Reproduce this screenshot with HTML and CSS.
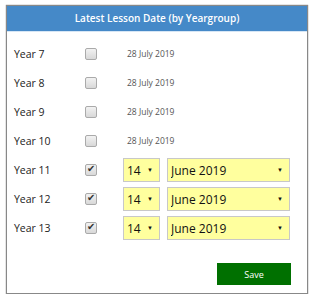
FILE: index.html
```html
<!DOCTYPE html>
<html lang="en">

<head>
    <meta charset="UTF-8">
    <meta name="viewport" content="width=device-width, initial-scale=1.0">
    <title>Latest Lesson Date</title>
    <link rel="stylesheet" href="styles.css">
</head>

<body>

    <!-- Latest lesson date panel -->
    <div class="panel">
        <div class="panel-header">Latest Lesson Date (by Yeargroup)</div>
        <div class="panel-body">
            <div class="year-row">
                <span class="year-label">Year 7</span>
                <input type="checkbox" class="year-check">
                <span class="last-date">28 July 2019</span>
            </div>
            <div class="year-row">
                <span class="year-label">Year 8</span>
                <input type="checkbox" class="year-check">
                <span class="last-date">28 July 2019</span>
            </div>
            <div class="year-row">
                <span class="year-label">Year 9</span>
                <input type="checkbox" class="year-check">
                <span class="last-date">28 July 2019</span>
            </div>
            <div class="year-row">
                <span class="year-label">Year 10</span>
                <input type="checkbox" class="year-check">
                <span class="last-date">28 July 2019</span>
            </div>
            <div class="year-row">
                <span class="year-label">Year 11</span>
                <input type="checkbox" class="year-check" checked>
                <div class="date-pick">
                    <div class="select-wrap day"><select><option>14</option></select></div>
                    <div class="select-wrap month"><select><option>June 2019</option></select></div>
                </div>
            </div>
            <div class="year-row">
                <span class="year-label">Year 12</span>
                <input type="checkbox" class="year-check" checked>
                <div class="date-pick">
                    <div class="select-wrap day"><select><option>14</option></select></div>
                    <div class="select-wrap month"><select><option>June 2019</option></select></div>
                </div>
            </div>
            <div class="year-row">
                <span class="year-label">Year 13</span>
                <input type="checkbox" class="year-check" checked>
                <div class="date-pick">
                    <div class="select-wrap day"><select><option>14</option></select></div>
                    <div class="select-wrap month"><select><option>June 2019</option></select></div>
                </div>
            </div>

            <div class="actions">
                <button type="button" class="save-btn">Save</button>
            </div>
        </div>
    </div>

</body>

</html>
```

FILE: styles.css
```css
body {
    font-family: 'Open Sans', 'Noto Sans', sans-serif;
    margin: 0;
    padding: 5px 0 0 6px;
    background-color: #fff;
    color: #222;
}

.panel {
    width: 300px;
    height: 287px;
    border: 1px solid #888;
    box-shadow: 0 0 1px rgba(0, 0, 0, 0.6);
    background: #fff;
    display: flex;
    flex-direction: column;
}

.panel-header {
    height: 25px;
    line-height: 25px;
    background-color: #4589c8;
    border-bottom: 1px solid #d6e6f5;
    color: #fff;
    font-size: 10px;
    font-weight: 600;
    text-align: center;
}

.panel-body {
    padding: 7px 16px 0 7px;
    display: flex;
    flex-direction: column;
}

.year-row {
    display: grid;
    grid-template-columns: 71px 38px 1fr;
    align-items: center;
    height: 29px;
}

.year-label {
    font-size: 10.5px;
}

.year-check {
    appearance: none;
    -webkit-appearance: none;
    width: 12px;
    height: 12px;
    margin: 0;
    border: 1px solid #aaa;
    border-radius: 2px;
    background: linear-gradient(#f2f2f2, #d8d8d8);
    position: relative;
}

.year-check:checked::before {
    content: "\2714";
    position: absolute;
    left: 1px;
    top: -2px;
    font-size: 10px;
    color: #333;
}

.last-date {
    padding-left: 4px;
    font-size: 8.5px;
    color: #555;
}

.date-pick {
    display: flex;
    gap: 7px;
}

.select-wrap {
    position: relative;
    height: 24px;
}

.select-wrap.day {
    width: 37px;
}

.select-wrap.month {
    width: 123px;
}

.select-wrap select {
    appearance: none;
    -webkit-appearance: none;
    width: 100%;
    height: 100%;
    margin: 0;
    padding: 0 0 0 3px;
    border: 1px solid #c8c8c8;
    border-radius: 0;
    background-color: #ffff9e;
    font-family: 'Open Sans', 'Noto Sans', sans-serif;
    font-size: 12px;
    color: #111;
    box-sizing: border-box;
}

.select-wrap::after {
    content: "\25BC";
    position: absolute;
    right: 7px;
    top: 8px;
    font-size: 6px;
    color: #111;
    pointer-events: none;
}

.actions {
    display: flex;
    justify-content: flex-end;
    margin-top: 21px;
}

.save-btn {
    width: 74px;
    height: 22px;
    background-color: #007000;
    color: #fff;
    border: none;
    border-radius: 0;
    font-family: 'Open Sans', 'Noto Sans', sans-serif;
    font-size: 9px;
    cursor: pointer;
}

.save-btn:hover {
    background-color: #005a00;
}
```
